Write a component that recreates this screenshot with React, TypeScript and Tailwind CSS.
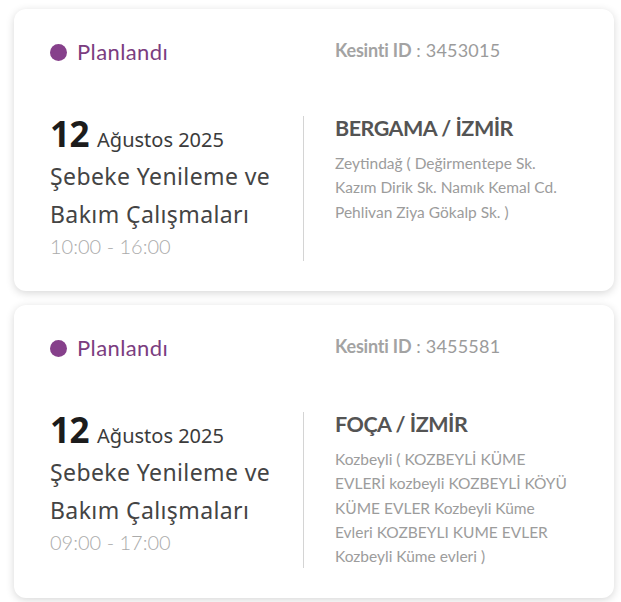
import React from "react";

type Item = {
  id: string;
  date: string;
  title: string[];
  time: string;
  place: string;
  address: string;
};

const items: Item[] = [
  {
    id: "3453015",
    date: "Ağustos 2025",
    title: ["Şebeke Yenileme ve", "Bakım Çalışmaları"],
    time: "10:00 - 16:00",
    place: "BERGAMA / İZMİR",
    address: "Zeytindağ ( Değirmentepe Sk. Kazım Dirik Sk. Namık Kemal Cd. Pehlivan Ziya Gökalp Sk. )",
  },
  {
    id: "3455581",
    date: "Ağustos 2025",
    title: ["Şebeke Yenileme ve", "Bakım Çalışmaları"],
    time: "09:00 - 17:00",
    place: "FOÇA / İZMİR",
    address:
      "Kozbeyli ( KOZBEYLİ KÜME EVLERİ kozbeyli KOZBEYLİ KÖYÜ KÜME EVLER Kozbeyli Küme Evleri KOZBEYLI KUME EVLER Kozbeyli Küme evleri )",
  },
];

function Card({ it }: { it: Item }) {
  return (
    <div className="rounded-[12px] bg-white shadow-[0_2px_9px_rgba(0,0,0,0.16)] pl-[36px] pr-[36px] pt-[31px] pb-[30px]">
      <div className="grid grid-cols-[254px_1fr] gap-x-[31px]">
        <div className="flex items-center gap-[10px] h-[24px] font-['Lato',sans-serif]">
          <span className="w-[17px] h-[17px] rounded-full bg-[#86408b] shrink-0" />
          <span className="text-[22px] text-[#7b3d80] leading-none tracking-[0.4px]">Planlandı</span>
        </div>
        <div className="flex items-center h-[24px] mt-[-2px] text-[18px] text-[#9b9b9b] font-['Lato',sans-serif] leading-none">
          <span className="font-bold text-[#a3a3a3] tracking-[-0.2px]">Kesinti ID</span>
          <span className="tracking-[0.2px]">&nbsp;: {it.id}</span>
        </div>
        <div className="mt-[52px] border-r border-[#d4d4d4] font-['Noto_Sans',sans-serif] pb-[2px]">
          <div className="flex items-baseline gap-[8px] leading-[36px]">
            <span className="text-[35px] font-bold text-[#1c1c1c] tracking-[-0.5px]">12</span>
            <span className="text-[20px] text-[#3b3b3b]">{it.date}</span>
          </div>
          <div className="text-[23px] text-[#444444] leading-[38px] mt-[-1px] tracking-[0.4px]">
            {it.title.map((t) => (
              <div key={t}>{t}</div>
            ))}
          </div>
          <div className="text-[20px] text-[#ababab] leading-[26px] font-['Lato',sans-serif] font-light">
            {it.time}
          </div>
        </div>
        <div className="mt-[49px] font-['Lato',sans-serif]">
          <div className="text-[21.5px] font-bold text-[#545454] leading-[30px] tracking-[-0.5px]">
            {it.place}
          </div>
          <div className="mt-[8px] text-[15.5px] text-[#9c9c9c] leading-[24.3px] pr-[4px]">{it.address}</div>
        </div>
      </div>
    </div>
  );
}

export default function App() {
  return (
    <div className="w-[621px] min-h-[602px] bg-white pl-[14px] pr-[7px] pt-[9px] flex flex-col gap-[14px]">
      {items.map((it) => (
        <Card key={it.id} it={it} />
      ))}
    </div>
  );
}
